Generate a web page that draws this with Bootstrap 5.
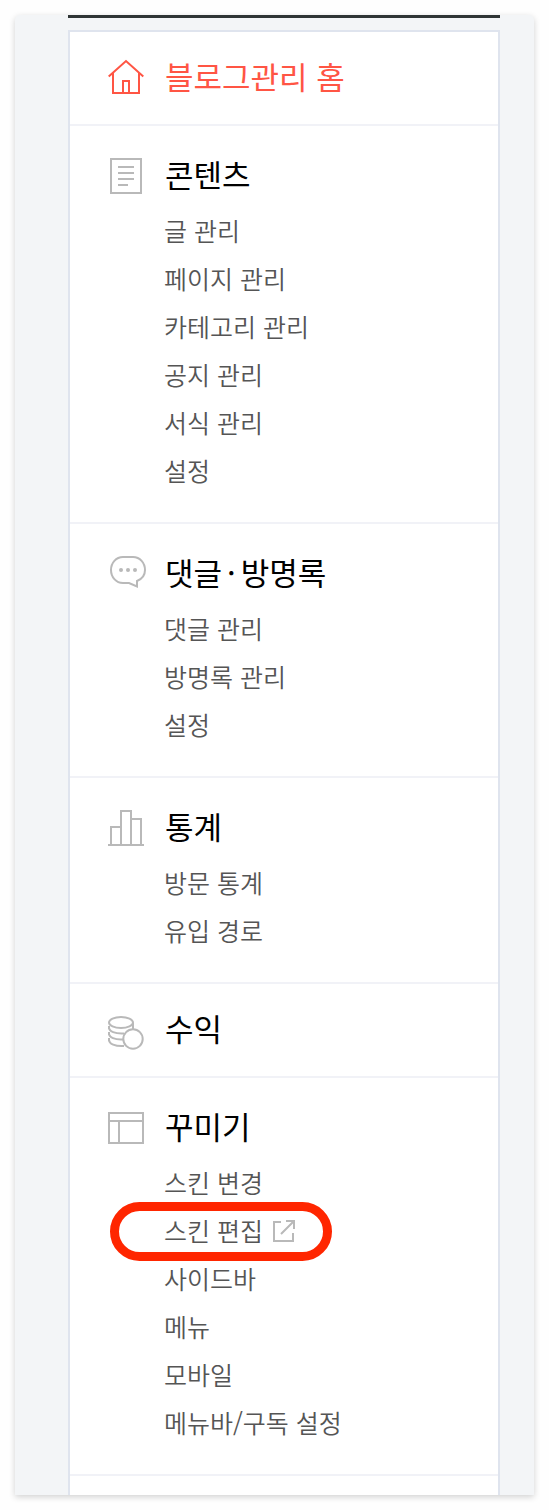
<!DOCTYPE html>
<html lang="ko">
<head>
<meta charset="utf-8">
<meta name="viewport" content="width=device-width, initial-scale=1">
<title>블로그관리</title>
<link href="https://cdn.jsdelivr.net/npm/bootstrap@5.3.0/dist/css/bootstrap.min.css" rel="stylesheet">
<style>
  body { background: #fefefe; font-family: "Noto Sans CJK KR", sans-serif; color: #000; }
  .frame { margin: 15px; padding: 0 34px 0 53px; background: #f3f5f7; border-radius: 5px 5px 0 0; box-shadow: 0 2px 6px rgba(0,0,0,.18); }
  .topline { height: 3px; background: #2f3535; margin-bottom: 12px; }
  .sidebar { background: #fff; border: 2px solid #dfe4ee; border-bottom: 0; padding-bottom: 19px; }
  .group { padding: 26px 0 28px 38px; border-bottom: 2px solid #f1f2f7; }
  .group-single { padding: 22px 0 22px 38px; }
  .group-title { height: 48px; font-size: 31px; line-height: 44px; font-weight: 400; gap: 17px; margin: 0; }
  .group-title a { align-self: flex-start; color: #000; }
  .group-title.current a { color: #ff5544; }
  .group-title svg { width: 40px; height: 40px; flex: none; fill: none; stroke: #b9b9b9; stroke-width: 2; }
  .group-title.current svg { stroke: #ff5544; }
  .middot { margin: 0 5px; }
  .entries { margin: 6px 0 0 56px; font-size: 25px; line-height: 48px; font-weight: 350; }
  .entries a { color: #555; }
  .entries li { height: 48px; }
  .entries svg { width: 24px; height: 24px; fill: none; stroke: #b9b9b9; stroke-width: 2; }
  .ring { left: -54px; top: -4px; width: 222px; height: 59px; border: 9px solid #ff2600; border-radius: 30px; pointer-events: none; }
</style>
</head>
<body>
<div class="frame">
  <div class="topline"></div>
  <nav class="sidebar" aria-label="블로그 관리">
    <section class="group group-single">
      <h2 class="group-title current d-flex align-items-center">
        <svg viewBox="0 0 40 40" aria-hidden="true"><path d="M.7 18.500 18 3l17.300 15.500M5 15v20h26V15M15 35V23h6v12"/></svg>
        <a class="text-decoration-none" href="#">블로그관리 홈</a>
      </h2>
    </section>
    <section class="group">
      <h2 class="group-title d-flex align-items-center">
        <svg viewBox="0 0 40 40" aria-hidden="true"><path d="M3 3h30v34H3zM10 11h16M10 17h16M10 23h16M10 29h10"/></svg>
        <a class="text-decoration-none" href="#">콘텐츠</a>
      </h2>
      <ul class="entries list-unstyled">
        <li><a class="text-decoration-none" href="#">글 관리</a></li>
        <li><a class="text-decoration-none" href="#">페이지 관리</a></li>
        <li><a class="text-decoration-none" href="#">카테고리 관리</a></li>
        <li><a class="text-decoration-none" href="#">공지 관리</a></li>
        <li><a class="text-decoration-none" href="#">서식 관리</a></li>
        <li><a class="text-decoration-none" href="#">설정</a></li>
      </ul>
    </section>
    <section class="group">
      <h2 class="group-title d-flex align-items-center">
        <svg viewBox="0 0 40 40" aria-hidden="true"><path d="M21 29H15C8 29 3 23 3 16S8 3 15 3h10c7 0 12 6 12 13 0 4.500-3 9-8 11v5.500z"/><g fill="#b9b9b9" stroke="none"><circle cx="13" cy="16" r="2"/><circle cx="20" cy="16" r="2"/><circle cx="27" cy="16" r="2"/></g></svg>
        <a class="text-decoration-none" href="#">댓글<span class="middot">·</span>방명록</a>
      </h2>
      <ul class="entries list-unstyled">
        <li><a class="text-decoration-none" href="#">댓글 관리</a></li>
        <li><a class="text-decoration-none" href="#">방명록 관리</a></li>
        <li><a class="text-decoration-none" href="#">설정</a></li>
      </ul>
    </section>
    <section class="group">
      <h2 class="group-title d-flex align-items-center">
        <svg viewBox="0 0 40 40" aria-hidden="true"><path d="M0 37h36M3 37V19h10M13 37V3h10v34M23 11h10v26"/></svg>
        <a class="text-decoration-none" href="#">통계</a>
      </h2>
      <ul class="entries list-unstyled">
        <li><a class="text-decoration-none" href="#">방문 통계</a></li>
        <li><a class="text-decoration-none" href="#">유입 경로</a></li>
      </ul>
    </section>
    <section class="group group-single">
      <h2 class="group-title d-flex align-items-center">
        <svg viewBox="0 0 40 40" aria-hidden="true"><ellipse cx="13" cy="12.500" rx="12" ry="5.500"/><path d="M1 17.500c0 4 6 6.500 15 6M1 23.500c0 4 6 6.500 14 6M1 29.500c0 4.500 6 7 15 6.500M1 16v3M1 22v3M1 28v3M25 13v6"/><circle cx="25" cy="29" r="9.700"/></svg>
        <a class="text-decoration-none" href="#">수익</a>
      </h2>
    </section>
    <section class="group">
      <h2 class="group-title d-flex align-items-center">
        <svg viewBox="0 0 40 40" aria-hidden="true"><path d="M1 5h34v30H1zM1 13h34M11 13v22"/></svg>
        <a class="text-decoration-none" href="#">꾸미기</a>
      </h2>
      <ul class="entries list-unstyled">
        <li><a class="text-decoration-none" href="#">스킨 변경</a></li>
        <li class="position-relative">
          <a class="text-decoration-none d-flex align-items-center gap-2" href="#">스킨 편집
            <svg viewBox="0 0 24 24" aria-hidden="true"><path d="M10 4H3v19h19v-8M10 16 23 3M15 3h8v8"/></svg>
          </a>
          <span class="ring position-absolute"></span>
        </li>
        <li><a class="text-decoration-none" href="#">사이드바</a></li>
        <li><a class="text-decoration-none" href="#">메뉴</a></li>
        <li><a class="text-decoration-none" href="#">모바일</a></li>
        <li><a class="text-decoration-none" href="#">메뉴바/구독 설정</a></li>
      </ul>
    </section>
  </nav>
</div>
<script src="https://cdn.jsdelivr.net/npm/bootstrap@5.3.0/dist/js/bootstrap.bundle.min.js"></script>
</body>
</html>
